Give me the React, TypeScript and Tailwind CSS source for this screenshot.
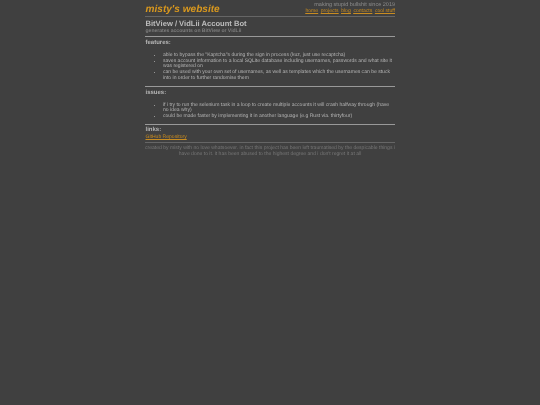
export default function App() {
  return (
    <div className="min-h-[405px] bg-[#404040] font-['Liberation_Sans',Arial,sans-serif] text-[#b4b4b4] [text-rendering:geometricPrecision]">
      <div className="mx-auto w-[250px] pt-[1.5px] text-[5.06px] leading-[5.75px] blur-[0.25px]">
        <header className="flex items-start justify-between border-b border-[#666666] h-[15px]">
          <h1 className="pl-[0.5px] pt-[1px] text-[10.1px] leading-[13px] font-bold italic text-[#d9981e]">misty's website</h1>
          <div className="text-right pt-[1.5px]">
            <div className="text-[5.5px] leading-[5.75px] text-[#8c8c8c]">making stupid bullshit since 2019</div>
            <nav className="flex justify-end gap-[2.7px] text-[#c98c20] underline">
              <a>home</a><a>projects</a><a>blog</a><a>contacts</a><a>cool stuff</a>
            </nav>
          </div>
        </header>
        <h2 className="mt-[2px] pl-[0.5px] text-[7.6px] leading-[10px] font-bold text-[#bdbdbd]">BitView / VidLii Account Bot</h2>
        <p className="mt-[0.5px] pl-[0.5px] text-[5.05px] leading-[5.75px] font-bold text-[#7d7d7d]">generates accounts on BitView or VidLii</p>
        <hr className="mt-[1px] border-t border-[#999999]" />
        <h3 className="mt-[2px] pl-[0.5px] text-[6px] leading-[9px] font-bold">features:</h3>
        <ul className="mt-[5px] list-disc pl-[18px]">
          <li>able to bypass the "Kaptcha"s during the sign in process (kuz, just use recaptcha)</li>
          <li>saves account information to a local SQLite database including usernames, passwords and what site it was registered on</li>
          <li>can be used with your own set of usernames, as well as templates which the usernames can be stuck into in order to further randomise them</li>
        </ul>
        <hr className="mt-[4.5px] border-t border-[#999999]" />
        <h3 className="mt-[2px] pl-[0.5px] text-[6px] leading-[9px] font-bold">issues:</h3>
        <ul className="mt-[4.5px] list-disc pl-[18px] pr-[3px]">
          <li>if i try to run the selenium task in a loop to create multiple accounts it will crash halfway through (have no idea why)</li>
          <li>could be made faster by implementing it in another language (e.g Rust via. thirtyfour)</li>
        </ul>
        <hr className="mt-[4.5px] border-t border-[#999999]" />
        <h3 className="mt-[1.5px] pl-[0.5px] text-[6px] leading-[7.5px] font-bold">links:</h3>
        <a className="block pl-[0.5px] text-[#c98c20] underline leading-[6px]">GitHub Repository</a>
        <footer className="mt-[2px] border-t border-[#666666] pt-[3px] text-center text-[#777777]">
          created by misty with no love whatsoever. in fact this project has been left traumatised by the despicable things i have done to it. it has been abused to the highest degree and i don't regret it at all
        </footer>
      </div>
    </div>
  );
}
